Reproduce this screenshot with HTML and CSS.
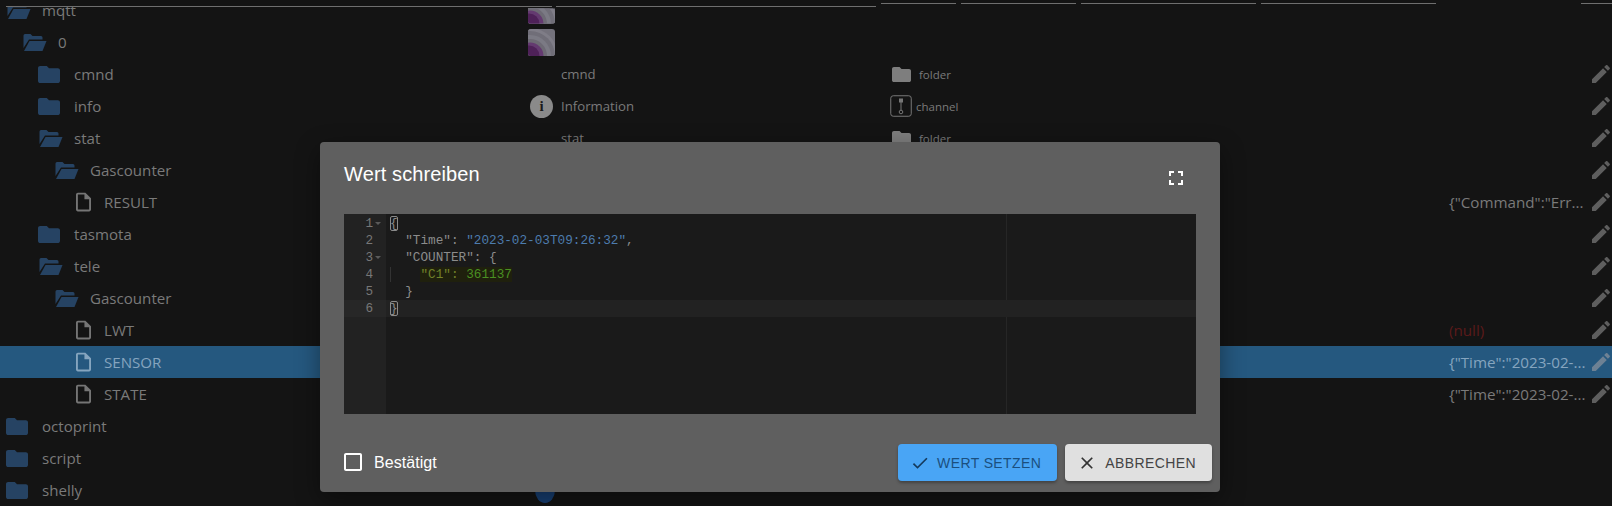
FILE: index.html
```html
<!DOCTYPE html>
<html lang="de">
<head>
<meta charset="utf-8">
<title>Wert schreiben</title>
<link rel="stylesheet" href="styles.css">
</head>
<body>
<svg class="defs" width="0" height="0" aria-hidden="true">
  <defs>
    <clipPath id="rc"><rect width="27" height="27" rx="3"/></clipPath>
    <symbol id="rings" viewBox="0 0 27 27">
      <g clip-path="url(#rc)">
        <rect width="27" height="27" fill="#74727c"/>
        <circle cx="2" cy="27" r="28" fill="#7f7d87"/>
        <circle cx="2" cy="27" r="25" fill="#706e78"/>
        <circle cx="2" cy="27" r="21" fill="#7b7a84"/>
        <circle cx="2" cy="27" r="17" fill="#6d6a74"/>
        <circle cx="2" cy="27" r="13.500" fill="#643a70"/>
        <circle cx="1" cy="27" r="10.500" fill="#4e2158"/>
      </g>
    </symbol>
    <symbol id="closed" viewBox="2 4 20 16" preserveAspectRatio="none"><path d="M10 4H4c-1.100 0-2 .9-2 2v12c0 1.100.9 2 2 2h16c1.100 0 2-.9 2-2V8c0-1.100-.9-2-2-2h-8l-2-2z"/></symbol>
    <symbol id="open" viewBox="0 0 24 18"><path d="M1 15V2.500a1.500 1.500 0 0 1 1.500-1.500H8l2 2h8.500a1.500 1.500 0 0 1 1.500 1.500V6.500H6.500z"/><path d="M7 8h17l-4 10H1.500z"/></symbol>
    <symbol id="file" viewBox="4 2 16 20"><path d="M14 2H6c-1.100 0-1.990.9-1.990 2L4 20c0 1.100.89 2 1.990 2H18c1.100 0 2-.9 2-2V8l-6-6zM6 20V4h7v5h5v11H6z"/></symbol>
    <symbol id="edit" viewBox="0 0 24 24"><path d="M3 17.250V21h3.750L17.810 9.940l-3.750-3.750L3 17.250zM20.710 7.040c.39-.39.39-1.020 0-1.410l-2.340-2.340c-.39-.39-1.020-.39-1.410 0l-1.830 1.830 3.750 3.750 1.830-1.830z"/></symbol>
  </defs>
</svg>

<div class="head">
  <span class="rule r1"></span><span class="rule r2"></span>
  <span class="rule r3"></span><span class="rule r4"></span><span class="rule r5"></span><span class="rule r6"></span><span class="rule r7"></span>
</div>

<main class="list">
  <div class="row">
    <div class="tree d0"><svg class="ic-open"><use href="#open"/></svg><span>mqtt</span></div>
    <div class="pic"><svg class="rings cut"><use href="#rings"/></svg></div><div></div><div></div><div></div><div></div>
  </div>
  <div class="row">
    <div class="tree d1"><svg class="ic-open"><use href="#open"/></svg><span>0</span></div>
    <div class="pic"><svg class="rings"><use href="#rings"/></svg></div><div></div><div></div><div></div><div></div>
  </div>
  <div class="row">
    <div class="tree d2"><svg class="ic-closed"><use href="#closed"/></svg><span>cmnd</span></div>
    <div class="pic"></div><div class="name">cmnd</div>
    <div class="type"><svg class="t-folder"><use href="#closed"/></svg><span>folder</span></div><div></div>
    <svg class="pen"><use href="#edit"/></svg>
  </div>
  <div class="row">
    <div class="tree d2"><svg class="ic-closed"><use href="#closed"/></svg><span>info</span></div>
    <div class="pic"><span class="info">i</span></div><div class="name">Information</div>
    <div class="type tight">
      <svg class="t-chan" viewBox="0 0 22 22"><rect x=".75" y=".75" width="20.500" height="20.500" rx="2.500"/><path d="M11 5v10"/><rect x="9.500" y="4" width="3" height="3" class="solid"/><circle cx="11" cy="17" r="1.800"/></svg>
      <span>channel</span>
    </div><div></div>
    <svg class="pen"><use href="#edit"/></svg>
  </div>
  <div class="row">
    <div class="tree d2"><svg class="ic-open"><use href="#open"/></svg><span>stat</span></div>
    <div class="pic"></div><div class="name">stat</div>
    <div class="type"><svg class="t-folder"><use href="#closed"/></svg><span>folder</span></div><div></div>
    <svg class="pen"><use href="#edit"/></svg>
  </div>
  <div class="row">
    <div class="tree d3"><svg class="ic-open"><use href="#open"/></svg><span>Gascounter</span></div>
    <div class="pic"></div><div></div><div></div><div></div>
    <svg class="pen"><use href="#edit"/></svg>
  </div>
  <div class="row">
    <div class="tree d4"><svg class="ic-file"><use href="#file"/></svg><span>RESULT</span></div>
    <div class="pic"></div><div></div><div></div><div class="val">{"Command":"Err...</div>
    <svg class="pen"><use href="#edit"/></svg>
  </div>
  <div class="row">
    <div class="tree d2"><svg class="ic-closed"><use href="#closed"/></svg><span>tasmota</span></div>
    <div class="pic"></div><div></div><div></div><div></div>
    <svg class="pen"><use href="#edit"/></svg>
  </div>
  <div class="row">
    <div class="tree d2"><svg class="ic-open"><use href="#open"/></svg><span>tele</span></div>
    <div class="pic"></div><div></div><div></div><div></div>
    <svg class="pen"><use href="#edit"/></svg>
  </div>
  <div class="row">
    <div class="tree d3"><svg class="ic-open"><use href="#open"/></svg><span>Gascounter</span></div>
    <div class="pic"></div><div></div><div></div><div></div>
    <svg class="pen"><use href="#edit"/></svg>
  </div>
  <div class="row">
    <div class="tree d4"><svg class="ic-file"><use href="#file"/></svg><span>LWT</span></div>
    <div class="pic"></div><div></div><div></div><div class="val null">(null)</div>
    <svg class="pen"><use href="#edit"/></svg>
  </div>
  <div class="row selected">
    <div class="tree d4"><svg class="ic-file"><use href="#file"/></svg><span>SENSOR</span></div>
    <div class="pic"></div><div></div><div></div><div class="val">{"Time":"2023-02-...</div>
    <svg class="pen"><use href="#edit"/></svg>
  </div>
  <div class="row">
    <div class="tree d4"><svg class="ic-file"><use href="#file"/></svg><span>STATE</span></div>
    <div class="pic"></div><div></div><div></div><div class="val">{"Time":"2023-02-...</div>
    <svg class="pen"><use href="#edit"/></svg>
  </div>
  <div class="row">
    <div class="tree d0"><svg class="ic-closed"><use href="#closed"/></svg><span>octoprint</span></div>
    <div class="pic"></div><div></div><div></div><div></div><div></div>
  </div>
  <div class="row">
    <div class="tree d0"><svg class="ic-closed"><use href="#closed"/></svg><span>script</span></div>
    <div class="pic"></div><div></div><div></div><div></div><div></div>
  </div>
  <div class="row">
    <div class="tree d0"><svg class="ic-closed"><use href="#closed"/></svg><span>shelly</span></div>
    <div class="pic"><span class="orb"></span></div><div></div><div></div><div></div><div></div>
  </div>
</main>

<section class="modal" role="dialog" aria-label="Wert schreiben">
  <header class="m-head">
    <h2>Wert schreiben</h2>
    <svg class="full" viewBox="0 0 24 24"><path d="M7 14H5v5h5v-2H7v-3zm-2-4h2V7h3V5H5v5zm12 7h-3v2h5v-5h-2v3zM14 5v2h3v3h2V5h-5z"/></svg>
  </header>
  <div class="editor">
    <div class="gutter">
      <div class="ln fold">1</div>
      <div class="ln">2</div>
      <div class="ln fold">3</div>
      <div class="ln">4</div>
      <div class="ln">5</div>
      <div class="ln active">6</div>
    </div>
    <div class="code">
      <span class="margin"></span>
      <div class="cl"><span class="br">{</span></div>
      <div class="cl">  <span class="k">"Time"</span><span class="p">:</span> <span class="s">"2023-02-03T09:26:32"</span><span class="p">,</span></div>
      <div class="cl">  <span class="k">"COUNTER"</span><span class="p">:</span> <span class="p">{</span></div>
      <div class="cl"><span class="guide">  </span>  <span class="hl"><span class="o">"C1"</span><span class="o">:</span> <span class="n">361137</span></span></div>
      <div class="cl">  <span class="p">}</span></div>
      <div class="cl active"><span class="br">}</span></div>
    </div>
  </div>
  <footer class="m-foot">
    <label class="check">
      <svg viewBox="0 0 24 24"><path d="M19 5v14H5V5h14m0-2H5c-1.100 0-2 .9-2 2v14c0 1.100.9 2 2 2h14c1.100 0 2-.9 2-2V5c0-1.100-.9-2-2-2z"/></svg>
      <span>Bestätigt</span>
    </label>
    <div class="actions">
      <button class="btn primary" type="button"><svg viewBox="0 0 24 24"><path d="M9 16.170L4.830 12l-1.420 1.410L9 19 21 7l-1.410-1.410z"/></svg>Wert setzen</button>
      <button class="btn plain" type="button"><svg viewBox="0 0 24 24"><path d="M19 6.410L17.590 5 12 10.590 6.410 5 5 6.410 10.590 12 5 17.590 6.410 19 12 13.410 17.590 19 19 17.590 13.410 12z"/></svg>Abbrechen</button>
    </div>
  </footer>
</section>
</body>
</html>
```
FILE: styles.css
```css
* { box-sizing: border-box; }
html, body { margin: 0; height: 100%; }
body {
  position: relative;
  height: 506px;
  overflow: hidden;
  background: #141414;
  color: #7a7a7a;
  font-family: "Open Sans", "Liberation Sans", sans-serif;
}
.defs { position: absolute; }

/* column header strip, opaque over the scrolled list */
.head { position: absolute; inset: 0 0 auto 0; height: 7px; z-index: 2; background: #141414; }
.rule { position: absolute; height: 1px; background: #6f6f6f; }
.r1 { left: 6px; width: 546px; top: 6px; }
.r2 { left: 556px; width: 320px; top: 6px; }
.r3 { left: 881px; width: 75px; top: 3px; }
.r4 { left: 961px; width: 115px; top: 3px; }
.r5 { left: 1081px; width: 175px; top: 3px; }
.r6 { left: 1261px; width: 175px; top: 3px; }
.r7 { left: 1581px; width: 31px; top: 3px; }

.list { margin-top: -6px; }
.row {
  display: grid;
  grid-template-columns: 528px 33px 329px 559px 140px 23px;
  height: 32px;
  align-items: center;
  font-size: 14px;
}
.row.selected { background: #25587f; color: #86a5bf; }

.tree {
  display: flex;
  align-items: center;
  font-size: 15.100px;
  white-space: nowrap;
}
.tree svg { flex: none; fill: #264363; }
.tree .ic-file { fill: #757575; }
.selected .tree .ic-file { fill: #86a5bf; }
.ic-open { width: 25px; height: 18px; margin-right: 11px; }
.ic-closed { width: 22px; height: 17px; margin-right: 14px; }
.ic-file { width: 15px; height: 20px; margin-right: 13px; margin-left: 6px; }
.d0 { padding-left: 6px; }
.d1 { padding-left: 22px; }
.d2 { padding-left: 38px; }
.d3 { padding-left: 54px; }
.d4 { padding-left: 70px; }

.pic { display: flex; align-items: center; height: 32px; }
.rings { width: 27px; height: 27px; }
.rings.cut { clip-path: inset(12px 0 0 0); }
.info {
  display: flex;
  align-items: center;
  justify-content: center;
  width: 23px;
  height: 23px;
  margin-left: 2px;
  border-radius: 50%;
  background: #8a8a8a;
  color: #1a1a1a;
  font: bold 15px "Liberation Serif", serif;
}
.orb { display: block; width: 20px; height: 26px; margin-left: 7px; border-radius: 50%; background: #173f73; }

.name { font-size: 13.200px; }
.type { display: flex; align-items: center; gap: 8px; padding-left: 2px; font-size: 11.500px; }
.type.tight { gap: 4px; padding-left: 0; }
.t-folder { width: 19px; height: 15px; fill: #7e7e7e; }
.t-chan { width: 22px; height: 22px; fill: none; stroke: #777; stroke-width: 1; }
.t-chan .solid { fill: #777; }
.val { font-size: 15.200px; white-space: nowrap; }
.null { color: #5b1a1a; }
.pen { width: 24px; height: 24px; fill: #5e5e5e; }
.selected .pen { fill: #6d8194; }

/* dialog */
.modal {
  position: absolute;
  left: 320px;
  top: 142px;
  width: 900px;
  height: 350px;
  z-index: 5;
  display: flex;
  flex-direction: column;
  padding: 0 24px 0 24px;
  border-radius: 4px;
  background: #5f5f5f;
  box-shadow: 0 8px 24px rgba(0, 0, 0, .4);
  font-family: "Liberation Sans", Arial, sans-serif;
  color: #fff;
}
.m-head { display: flex; align-items: flex-start; justify-content: space-between; height: 72px; padding: 20px 12px 0 0; }
.m-head h2 { margin: 0; font-size: 20px; font-weight: 400; line-height: 24px; letter-spacing: .12px; }
.full { width: 24px; height: 24px; fill: #fff; margin-top: 4px; margin-right: -4px; }

.editor { display: flex; height: 200px; background: #1a1a1a; font: 12.700px/17px "Liberation Mono", monospace; color: #8c8c8c; }
.gutter { width: 42px; flex: none; padding-top: 1px; background: #222; color: #777; }
.ln { position: relative; height: 17px; padding-right: 13px; text-align: right; }
.ln.active { background: #272727; }
.fold::after {
  content: "";
  position: absolute;
  right: 5px;
  top: 7px;
  border: 3px solid transparent;
  border-top: 3px solid #5a5a5a;
  border-bottom: 0;
}
.code { position: relative; flex: 1; padding-top: 1px; }
.margin { position: absolute; left: 620px; top: 0; bottom: 0; width: 1px; background: #262626; }
.cl { position: relative; height: 17px; padding-left: 4px; white-space: pre; }
.cl.active { background: #222; }
.br { outline: 1px solid #8a8a8a; outline-offset: -1px; border-radius: 2px; }
.guide { box-shadow: inset 1px 0 0 #333; }
.k, .p { color: #8c8c8c; }
.s { color: #4d7cae; }
.o { color: #72822a; }
.n { color: #4a9022; }
.hl { background: #1f200d; }

.m-foot { display: flex; align-items: flex-start; justify-content: space-between; padding-top: 30px; margin-right: -16px; }
.check { display: flex; align-items: center; gap: 9px; margin-left: -3px; height: 36px; font-size: 16px; padding-top: 1px; letter-spacing: .05px; }
.check svg { width: 24px; height: 24px; fill: #fff; margin-top: -1px; }
.actions { display: flex; gap: 8px; }
.btn {
  display: flex;
  align-items: center;
  height: 37px;
  padding: 0 16px 0 12px;
  border: 0;
  border-radius: 4px;
  font: 14px "Liberation Sans", Arial, sans-serif;
  letter-spacing: .4px;
  text-transform: uppercase;
  box-shadow: 0 2px 3px rgba(0, 0, 0, .3);
}
.btn svg { width: 20px; height: 20px; margin-right: 8px; flex: none; }
.primary { background: #49a5f5; color: #1b4f7e; padding-left: 12px; }
.primary svg { fill: #143a5c; margin-right: 7px; }
.plain { background: #e0e0e0; color: #444; }
.plain svg { fill: #333; }
```
